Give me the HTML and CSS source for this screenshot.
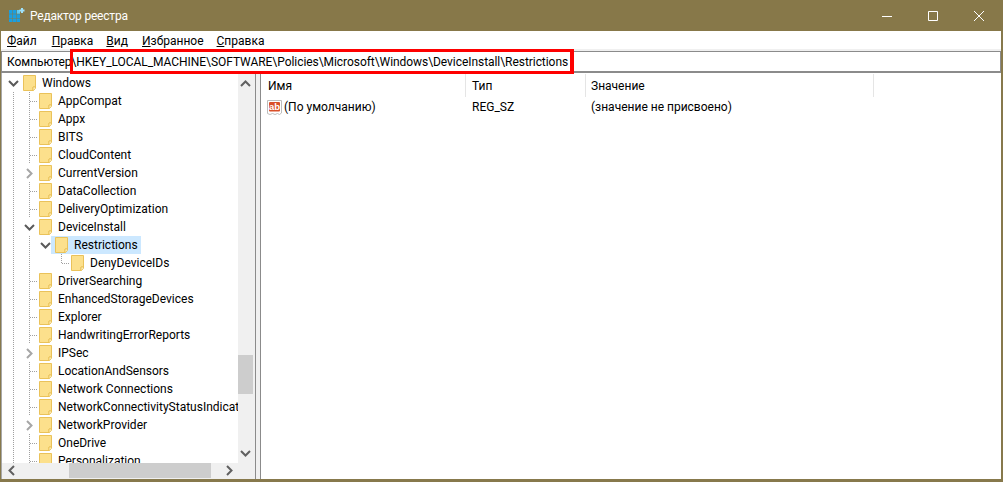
FILE: index.html
```html
<!DOCTYPE html>
<html lang="ru">
<head>
<meta charset="utf-8">
<title>Редактор реестра</title>
<link rel="stylesheet" href="styles.css">
</head>
<body>
<svg class="defs" width="0" height="0" aria-hidden="true">
  <symbol id="folder" viewBox="0 0 13 16">
    <path d="M.5.5h12v11.5h-2.5v3.5H.5z" fill="#fce08c" stroke="#eac25a"/>
    <path d="M10 15.500v-3.500h2.500v1.200l-2 2.300z" fill="#fff3c8" stroke="#eac25a"/>
  </symbol>
  <symbol id="down" viewBox="0 0 11 7"><path d="M1 1l4.500 4.500L10 1" fill="none" stroke="currentColor" stroke-width="2"/></symbol>
  <symbol id="right" viewBox="0 0 7 11"><path d="M1 1l4.500 4.500L1 10" fill="none" stroke="currentColor" stroke-width="2"/></symbol>
</svg>
<div class="window">
  <header class="titlebar">
    <svg class="appicon" width="17" height="17" viewBox="0 0 17 17" aria-hidden="true">
      <path fill="#1a9fe0" d="M1 3h3.500v3.700H1zM5 3h3.500v3.700H5zM1 7.200h3.500v3.700H1zM5 7.200h3.500v3.700H5zM9 7.200h3v3.700H9zM1 11.400h3.500v3.700H1zM5 11.400h3.500v3.700H5zM9 11.400h3v3.700H9z"/>
      <path fill="#5ccbf5" d="M9 3h3v3.700H9z"/>
      <path fill="#9fe2fa" d="M13 1h2v1.500h1.500v2H15V6h-2V4.500h-1.500v-2H13z"/>
    </svg>
    <span class="apptitle">Редактор реестра</span>
    <div class="caption">
      <span class="capbtn"><svg width="10" height="10" viewBox="0 0 10 10"><path d="M0 5.500h10" stroke="#fff"/></svg></span>
      <span class="capbtn"><svg width="10" height="10" viewBox="0 0 10 10"><path d="M.5.500h9v9h-9z" fill="none" stroke="#fff"/></svg></span>
      <span class="capbtn"><svg width="10" height="10" viewBox="0 0 10 10"><path d="M0 0l10 10M10 0L0 10" stroke="#fff"/></svg></span>
    </div>
  </header>
  <nav class="menubar">
    <span class="mi mi-file"><u>Ф</u>айл</span>
    <span class="mi mi-edit"><u>П</u>равка</span>
    <span class="mi"><u>В</u>ид</span>
    <span class="mi mi-fav"><u>И</u>збранное</span>
    <span class="mi"><u>С</u>правка</span>
  </nav>
  <div class="address">Компьютер\HKEY_LOCAL_MACHINE\SOFTWARE\Policies\Microsoft\Windows\DeviceInstall\Restrictions</div>
  <div class="annotation"></div>
  <main class="panes">
    <section class="treepane">
      <div class="tree">
        <div class="row"><i class="tw"><svg class="chev open" width="11" height="7"><use href="#down"/></svg></i><span class="node"><svg class="fld" width="13" height="16"><use href="#folder"/></svg><span>Windows</span></span></div>
        <div class="row"><i class="g"></i><i class="tw tee"></i><span class="node"><svg class="fld" width="13" height="16"><use href="#folder"/></svg><span>AppCompat</span></span></div>
        <div class="row"><i class="g"></i><i class="tw tee"></i><span class="node"><svg class="fld" width="13" height="16"><use href="#folder"/></svg><span>Appx</span></span></div>
        <div class="row"><i class="g"></i><i class="tw tee"></i><span class="node"><svg class="fld" width="13" height="16"><use href="#folder"/></svg><span>BITS</span></span></div>
        <div class="row"><i class="g"></i><i class="tw tee"></i><span class="node"><svg class="fld" width="13" height="16"><use href="#folder"/></svg><span>CloudContent</span></span></div>
        <div class="row"><i class="g"></i><i class="tw"><svg class="chev closed" width="7" height="11"><use href="#right"/></svg></i><span class="node"><svg class="fld" width="13" height="16"><use href="#folder"/></svg><span>CurrentVersion</span></span></div>
        <div class="row"><i class="g"></i><i class="tw tee"></i><span class="node"><svg class="fld" width="13" height="16"><use href="#folder"/></svg><span>DataCollection</span></span></div>
        <div class="row"><i class="g"></i><i class="tw tee"></i><span class="node"><svg class="fld" width="13" height="16"><use href="#folder"/></svg><span>DeliveryOptimization</span></span></div>
        <div class="row"><i class="g"></i><i class="tw"><svg class="chev open" width="11" height="7"><use href="#down"/></svg></i><span class="node"><svg class="fld" width="13" height="16"><use href="#folder"/></svg><span>DeviceInstall</span></span></div>
        <div class="row"><i class="g"></i><i class="g"></i><i class="tw"><svg class="chev open" width="11" height="7"><use href="#down"/></svg></i><span class="node selected"><svg class="fld" width="13" height="16"><use href="#folder"/></svg><span>Restrictions</span></span></div>
        <div class="row"><i class="g"></i><i class="g"></i><i class="blank"></i><i class="tw corner"></i><span class="node"><svg class="fld" width="13" height="16"><use href="#folder"/></svg><span>DenyDeviceIDs</span></span></div>
        <div class="row"><i class="g"></i><i class="tw tee"></i><span class="node"><svg class="fld" width="13" height="16"><use href="#folder"/></svg><span>DriverSearching</span></span></div>
        <div class="row"><i class="g"></i><i class="tw tee"></i><span class="node"><svg class="fld" width="13" height="16"><use href="#folder"/></svg><span>EnhancedStorageDevices</span></span></div>
        <div class="row"><i class="g"></i><i class="tw tee"></i><span class="node"><svg class="fld" width="13" height="16"><use href="#folder"/></svg><span>Explorer</span></span></div>
        <div class="row"><i class="g"></i><i class="tw tee"></i><span class="node"><svg class="fld" width="13" height="16"><use href="#folder"/></svg><span>HandwritingErrorReports</span></span></div>
        <div class="row"><i class="g"></i><i class="tw"><svg class="chev closed" width="7" height="11"><use href="#right"/></svg></i><span class="node"><svg class="fld" width="13" height="16"><use href="#folder"/></svg><span>IPSec</span></span></div>
        <div class="row"><i class="g"></i><i class="tw tee"></i><span class="node"><svg class="fld" width="13" height="16"><use href="#folder"/></svg><span>LocationAndSensors</span></span></div>
        <div class="row"><i class="g"></i><i class="tw tee"></i><span class="node"><svg class="fld" width="13" height="16"><use href="#folder"/></svg><span>Network Connections</span></span></div>
        <div class="row"><i class="g"></i><i class="tw tee"></i><span class="node"><svg class="fld" width="13" height="16"><use href="#folder"/></svg><span>NetworkConnectivityStatusIndicator</span></span></div>
        <div class="row"><i class="g"></i><i class="tw"><svg class="chev closed" width="7" height="11"><use href="#right"/></svg></i><span class="node"><svg class="fld" width="13" height="16"><use href="#folder"/></svg><span>NetworkProvider</span></span></div>
        <div class="row"><i class="g"></i><i class="tw tee"></i><span class="node"><svg class="fld" width="13" height="16"><use href="#folder"/></svg><span>OneDrive</span></span></div>
        <div class="row"><i class="g"></i><i class="tw tee"></i><span class="node"><svg class="fld" width="13" height="16"><use href="#folder"/></svg><span>Personalization</span></span></div>
      </div>
      <div class="vscroll">
        <svg class="sb-arrow" width="11" height="7" viewBox="0 0 11 7"><path d="M1 6l4.500-4.500L10 6" fill="none" stroke="#606060" stroke-width="2"/></svg>
        <div class="vthumb"></div>
        <svg class="sb-arrow sb-bottom" width="11" height="7" viewBox="0 0 11 7"><path d="M1 1l4.500 4.500L10 1" fill="none" stroke="#606060" stroke-width="2"/></svg>
      </div>
      <div class="hscroll">
        <svg class="h-arrow" width="7" height="11" viewBox="0 0 7 11"><path d="M6 1L1.500 5.500 6 10" fill="none" stroke="#606060" stroke-width="2"/></svg>
        <div class="hthumb"></div>
        <svg class="h-arrow" width="7" height="11" viewBox="0 0 7 11"><path d="M1 1l4.500 4.500L1 10" fill="none" stroke="#606060" stroke-width="2"/></svg>
      </div>
    </section>
    <section class="listpane">
      <div class="cols head">
        <div class="col">Имя</div>
        <div class="col col-type">Тип</div>
        <div class="col col-value">Значение</div>
      </div>
      <div class="cols item">
        <div class="col name-cell">
          <svg class="regicon" width="15" height="15" viewBox="0 0 15 15" aria-hidden="true">
            <path d="M.5.500h14v12.500l-2 1.500-2-1-2.500 1-2.500-1-2.500 1-2.500-1z" fill="#fff" stroke="#bdbdbd"/>
            <rect x="2" y="2" width="11" height="9.500" rx="1" fill="#d9502a"/>
            <text x="7.500" y="10" class="regtext">ab</text>
          </svg>
          <span>(По умолчанию)</span>
        </div>
        <div class="col col-type">REG_SZ</div>
        <div class="col col-value">(значение не присвоено)</div>
      </div>
    </section>
  </main>
</div>
</body>
</html>
```
FILE: styles.css
```css
* { box-sizing: border-box; }
html, body { margin: 0; padding: 0; width: 1003px; height: 482px; overflow: hidden; }
body { font-family: Roboto, "Open Sans", "Liberation Sans", sans-serif; font-size: 12px; color: #000; }
.defs { position: absolute; }
.window {
  position: relative;
  width: 1003px; height: 482px;
  display: flex; flex-direction: column;
  background: #87794c;
  padding: 0 2px 3px 1px;
}
.titlebar {
  flex: 0 0 31px;
  display: flex; align-items: center;
  margin: 0 -2px 0 -1px;
  padding: 0 1px 0 8px;
  background: #877849;
  color: #fff;
}
.appicon { margin-right: 5px; }
.apptitle { font-size: 12px; letter-spacing: -0.2px; }
.caption { margin-left: auto; display: flex; }
.capbtn { width: 46px; height: 31px; display: flex; align-items: center; justify-content: center; }
.menubar {
  flex: 0 0 20px;
  display: flex; align-items: center;
  padding: 1px 0 0 6px;
  background: #fff;
  border-bottom: 2px solid #f0f0f0;
  height: 20px;
}
.mi { display: block; margin-right: 14px; }
.mi-file { margin-right: 15px; }
.mi-edit { margin-right: 13px; }
.mi-fav { margin-right: 13px; }
.address {
  flex: 0 0 22px;
  display: flex; align-items: center;
  padding-left: 5px;
  background: #fff;
  border: 1px solid #8b8b8b;
  border-width: 1px 0 2px 1px;
  border-right: 1px solid #8b8b8b;
  white-space: nowrap;
  letter-spacing: -0.055px;
}
.annotation {
  position: absolute;
  left: 70px; top: 49px;
  width: 504px; height: 25px;
  border: 3px solid #fe0000;
  border-right-width: 4px;
}
.panes { flex: 1 1 auto; min-height: 0; display: flex; background: #f0f0f0; }
.treepane {
  flex: 0 0 255px;
  display: grid;
  grid-template-columns: 236px 17px;
  grid-template-rows: 390px 15px;
  border-left: 1px solid #a8a8a8;
  border-right: 1px solid #8b8b8b;
  background: #f0f0f0;
}
.tree {
  overflow: hidden;
  padding: 1px 0 0 3px;
  background: #fff;
}
.row { height: 18px; display: flex; align-items: stretch; white-space: nowrap; }
.g, .tw, .blank { flex: 0 0 16px; display: flex; align-items: center; justify-content: center; }
.g {
  background: repeating-linear-gradient(to bottom, #a0a0a0 0 1px, transparent 1px 2px) 8px 0 / 1px 100% no-repeat;
}
.tee {
  background:
    repeating-linear-gradient(to bottom, #a0a0a0 0 1px, transparent 1px 2px) 8px 0 / 1px 100% no-repeat,
    repeating-linear-gradient(to right, #a0a0a0 0 1px, transparent 1px 2px) 9px 9px / 7px 1px no-repeat;
}
.corner {
  background:
    repeating-linear-gradient(to bottom, #a0a0a0 0 1px, transparent 1px 2px) 8px 0 / 1px 9px no-repeat,
    repeating-linear-gradient(to right, #a0a0a0 0 1px, transparent 1px 2px) 9px 9px / 7px 1px no-repeat;
}
.chev.open { color: #5a5a5a; }
.chev.closed { color: #a6a6a6; }
.node { display: flex; align-items: center; padding: 0 4px; margin-left: -2px; line-height: 18px; }
.node.selected { background: #cce8ff; padding-right: 3px; }
.fld { margin-right: 6px; flex: none; }
.vscroll {
  grid-row: 1 / span 2; grid-column: 2;
  display: flex; flex-direction: column; align-items: flex-start;
  background: #f0f0f0;
  padding-top: 7px;
}
.sb-arrow { flex: none; margin-left: 2px; }
.vthumb { flex: none; width: 15px; height: 39px; margin-top: 268px; background: #cdcdcd; }
.sb-bottom { margin-top: 56px; }
.hscroll {
  grid-row: 2; grid-column: 1;
  display: flex; align-items: center;
  background: #f0f0f0;
  padding-left: 6px;
}
.h-arrow { flex: none; }
.hthumb { flex: none; width: 142px; height: 15px; margin: 0 15px 0 54px; background: #cdcdcd; }
.listpane {
  flex: 1 1 auto;
  margin-left: 4px;
  border-left: 1px solid #8b8b8b;
  background: #fff;
}
.cols { display: grid; grid-template-columns: 205px 120px 288px; }
.head { height: 25px; padding-top: 1px; }
.head .col { border-right: 1px solid #e5e5e5; padding-left: 7px; line-height: 24px; height: 23px; }
.head .col-type { padding-left: 6px; }
.head .col-value { padding-left: 5px; }
.item { height: 18px; line-height: 18px; }
.item .col { padding-left: 6px; white-space: nowrap; }
.item .col-value { padding-left: 5px; }
.name-cell { display: flex; align-items: center; }
.regicon { margin-right: 2px; flex: none; }
.regtext { font-family: "Liberation Sans", sans-serif; font-size: 9.5px; font-weight: 700; fill: #fff; text-anchor: middle; }
```
